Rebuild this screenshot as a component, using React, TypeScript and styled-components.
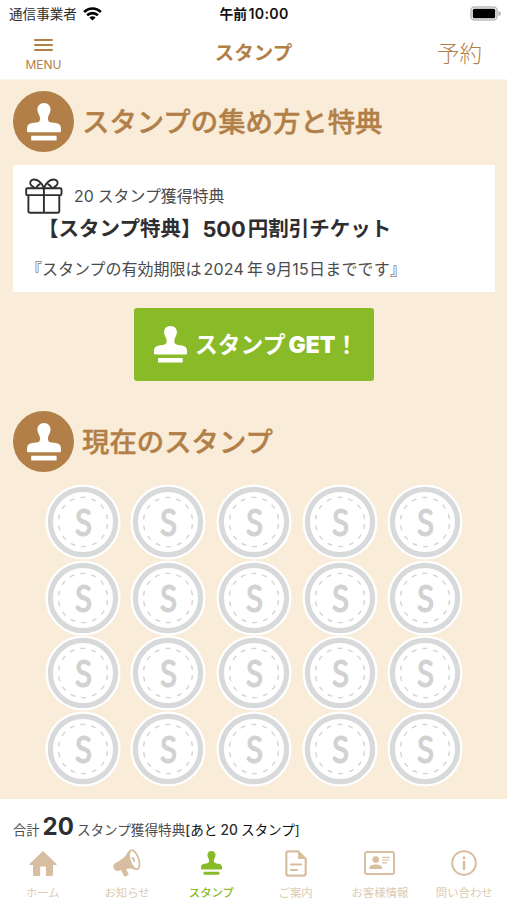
import React from 'react';
import styled, { createGlobalStyle } from 'styled-components';

const brown = '#b17f47';
const tan = '#d8bea0';
const green = '#89ba28';
const ink = '#2e2e30';
const gray = '#4b4b4d';

const Global = createGlobalStyle`
  * { box-sizing: border-box; }
  body { margin: 0; background: #fff; font-family: Inter, "Noto Sans CJK JP", sans-serif; color: ${ink}; }
  svg { display: block; flex: none; }
`;

const Screen = styled.div`
  width: 507px; height: 900px; display: flex; flex-direction: column;
  overflow: hidden; background: #fff;
`;
const StatusBar = styled.header`
  height: 28px; flex: none; display: grid; grid-template-columns: 1fr auto 1fr;
  align-items: center; padding: 0 5px 0 9px;
`;
const Carrier = styled.div`display: flex; align-items: center; gap: 6px;`;
const Clock = styled.div`display: flex; align-items: baseline; padding-right: 3px;`;
const BatterySlot = styled.div`display: flex; justify-content: flex-end; padding-bottom: 1px;`;
const NavBar = styled.div`
  height: 52px; flex: none; display: grid; grid-template-columns: 87px 1fr 87px;
  align-items: center; border-bottom: 1px solid #fbf6ec; color: ${brown};
`;
const MenuButton = styled.div`
  display: flex; flex-direction: column; align-items: center; gap: 6px; padding-top: 3px;
`;
const Title = styled.div`display: flex; justify-content: center;`;
const Main = styled.main`
  flex: none; height: 719px; background: #f9ecd8; padding: 11px 12px 0 13px;
`;
const Text = styled.span<{ $size: number; $weight?: number; $color?: string; $track?: number; $left?: number }>`
  white-space: nowrap; line-height: 1.2; flex: none;
  font-size: ${p => p.$size}px; font-weight: ${p => p.$weight ?? 400};
  color: ${p => p.$color ?? 'inherit'}; letter-spacing: ${p => p.$track ?? 0}px;
  margin-left: ${p => p.$left ?? 0}px;
`;
const Heading = styled.div`
  display: flex; align-items: center; height: 61px; gap: 8px; color: ${brown};
`;
const HeadingText = styled.h2`
  margin: 2px 0 0; font-size: 27.4px; font-weight: 500; line-height: 1.2; white-space: nowrap;
  -webkit-text-stroke: 0.4px currentColor;
`;
const Disc = styled.div`
  width: 61px; height: 61px; border-radius: 50%; background: ${brown}; color: #fff;
  display: flex; align-items: center; justify-content: center;
`;
const Coupon = styled.section`
  margin-top: 13px; height: 127px; background: #fff; padding: 13px 0 0 12px;
`;
const CouponTop = styled.div`display: flex; align-items: center; height: 36px; gap: 11px;`;
const CouponName = styled.div`
  display: flex; align-items: center; height: 29px; padding: 1px 0 0 13px;
`;
const Expiry = styled.div`
  display: flex; align-items: center; height: 20px; margin-top: 17px; padding-left: 1px; color: ${gray};
`;
const GetButton = styled.div`
  width: 240px; height: 73px; margin: 16px auto 30px; border-radius: 3px; background: ${green};
  display: flex; align-items: center; color: #fff; padding-left: 20px; gap: 8px;
`;
const StampGrid = styled.div`
  display: grid; grid-template-columns: repeat(5, 85.6px); grid-auto-rows: 75.7px;
  justify-content: center; justify-items: center; margin-top: 12px;
`;
const Total = styled.div`
  height: 48px; flex: none; display: flex; align-items: baseline; padding: 14px 0 0 13px;
`;
const Tabs = styled.nav`
  flex: 1; display: grid; grid-template-columns: repeat(6, 84.3px); justify-content: center;
`;
const Tab = styled.div<{ $active?: boolean }>`
  display: flex; flex-direction: column; align-items: center; gap: 8px;
  color: ${p => (p.$active ? green : tan)};
`;
const TabIcon = styled.div`height: 32px; display: flex; align-items: center; justify-content: center;`;

const StampIcon = ({ w = 34, h = 38 }: { w?: number; h?: number }) => (
  <svg width={w} height={h} viewBox="0 0 34 38" fill="currentColor" preserveAspectRatio="none">
    <path d="M17 0C12.7 0 10.4 3 10.4 6.4C10.4 10 13.1 12.2 13.1 15.5C13.1 18.1 11.8 19.3 9.2 19.6L5 20C1.6 20.5 0 22.5 0 25.5V28Q0 29.2 1.2 29.2H32.8Q34 29.2 34 28V25.5C34 22.5 32.4 20.5 29 20L24.8 19.6C22.2 19.3 20.9 18.1 20.9 15.5C20.9 12.2 23.6 10 23.6 6.4C23.6 3 21.3 0 17 0Z" />
    <rect x="4.2" y="32.8" width="25.4" height="4.7" rx=".6" />
  </svg>
);

const Wifi = () => (
  <svg width="19" height="14" viewBox="0 0 19 14">
    <g fill="none" stroke="#000" strokeWidth="2.6">
      <path d="M1.1 5C5.8.4 13.2.4 17.9 5" />
      <path d="M4.1 8.3C7.1 5.4 11.9 5.4 14.9 8.3" />
    </g>
    <path d="M6.4 10.5C8.2 8.9 10.8 8.9 12.6 10.5L9.5 13.6Z" />
  </svg>
);

const Battery = () => (
  <svg width="32" height="15" viewBox="0 0 32 15">
    <rect x="1" y="1" width="26" height="13" rx="3.5" fill="#fff" stroke="#bcbcbc" strokeWidth="1.6" />
    <rect x="2.8" y="2.8" width="22.4" height="9.4" rx="1.5" />
    <path d="M28.5 4.8Q30.8 5.7 30.8 7.5T28.5 10.2Z" fill="#aaa" />
  </svg>
);

const Gift = () => (
  <svg width="38" height="36" viewBox="0 0 38 36" fill="none" stroke={ink} strokeWidth="1.9">
    <rect x="1.2" y="10.3" width="35.3" height="6.8" rx="1" />
    <path d="M3.4 17.1V33Q3.4 34.8 5.2 34.8H32.5Q34.3 34.8 34.3 33V17.1M18.9 10.3V34.8" />
    <path d="M18.9 10.3C16.8 4.2 12.3 1.2 8.5 1.5C5 1.9 4.2 5.5 6.4 7.5Q8 9 10 10.2M11 10Q12.5 7 15.2 6M18.9 10.3C21 4.2 25.5 1.2 29.3 1.5C32.8 1.9 33.6 5.5 31.4 7.5Q29.8 9 27.8 10.2M26.8 10Q25.3 7 22.6 6" />
  </svg>
);

const Coin = () => (
  <svg width="76" height="76" viewBox="0 0 76 76">
    <circle cx="38" cy="38" r="37.6" fill="#fff" />
    <circle cx="38" cy="38" r="32.6" fill="none" stroke="#d8d9da" strokeWidth="5.2" />
    <circle cx="38" cy="38" r="24.6" fill="none" stroke="#d3d4d5" strokeWidth="1.4"
      strokeDasharray="4.9 6.14" transform="rotate(5 38 38)" />
    <text transform="translate(38.5 50.6) scale(.87 1)" textAnchor="middle" fontFamily="Lato" fontWeight="300"
      fontSize="34.5" fill="#d2d2d2" stroke="#d2d2d2" strokeWidth="3" strokeLinejoin="round">S</text>
  </svg>
);

const HomeIcon = () => (
  <svg width="28" height="25" viewBox="0 0 28 25" fill="currentColor">
    <path d="M14 0L27.6 13Q28 14 27 14H24V23.5Q24 25 22.5 25H17V15.5H11.2V25H5.5Q4 25 4 23.5V14H1Q0 14 .5 13Z" />
  </svg>
);
const HornIcon = () => (
  <svg width="28" height="28" viewBox="0 0 28 28" fill="currentColor">
    <path d="M15.3 1.5C13.2 7.5 9.1 10.8 3.2 13.4C.5 14.7-.3 17 .8 19.3C1.9 21.9 4 22.5 6.6 21.5L8 21L10.8 26.5C11.2 27.4 12 27.6 12.9 27.2L14.9 26.3C15.8 25.9 15.7 25.2 15.3 24.5L13.2 20C16.3 19 19.6 19.2 23.3 21Z" />
    <ellipse cx="21.3" cy="10.7" rx="4.4" ry="9.9" transform="rotate(-18 21.3 10.7)" fill="#fff" stroke="currentColor" strokeWidth="1.7" />
    <path d="M18.4 8C21.3 7.2 23.3 11.6 20.8 13.6Z" />
  </svg>
);
const DocIcon = () => (
  <svg width="22" height="27" viewBox="0 0 22 27" fill="none" stroke="currentColor" strokeWidth="2.2">
    <path d="M3.4 1.3H13L20.7 9V23.5Q20.7 25.7 18.5 25.7H3.4Q1.3 25.7 1.3 23.5V3.4Q1.3 1.3 3.4 1.3Z" />
    <path d="M13 1.3V9H20.7Z" fill="currentColor" stroke="none" />
    <path d="M6 14.5H16M6 20H12" strokeLinecap="round" />
  </svg>
);
const CardIcon = () => (
  <svg width="31" height="24" viewBox="0 0 31 24" fill="currentColor">
    <rect x="1" y="1" width="29" height="22" rx="2" fill="none" stroke="currentColor" strokeWidth="2" />
    <circle cx="11.7" cy="8.6" r="3.3" />
    <path d="M5.5 18V16.5C5.5 12.5 18 12.5 18 16.5V18Z" />
    <path d="M18.3 6.3H25.7M18.3 9H25.7M18.3 11.8H22.8" stroke="currentColor" strokeWidth="1.2" />
  </svg>
);
const InfoIcon = () => (
  <svg width="26" height="26" viewBox="0 0 26 26" fill="none" stroke="currentColor" strokeLinecap="round">
    <circle cx="13" cy="13" r="11.8" strokeWidth="2" />
    <path d="M13 12V18.7" strokeWidth="2.5" />
    <circle cx="13" cy="7.8" r="1.5" fill="currentColor" stroke="none" />
  </svg>
);

const tabs = [
  { label: 'ホーム', icon: <HomeIcon /> },
  { label: 'お知らせ', icon: <HornIcon /> },
  { label: 'スタンプ', icon: <StampIcon w={21} h={24} />, active: true },
  { label: 'ご案内', icon: <DocIcon /> },
  { label: 'お客様情報', icon: <CardIcon /> },
  { label: '問い合わせ', icon: <InfoIcon /> },
];

export default function App() {
  return (
    <Screen>
      <Global />
      <StatusBar>
        <Carrier><Text $size={13.6}>通信事業者</Text><Wifi /></Carrier>
        <Clock>
          <Text $size={13.8} $weight={600} $color="#111">午前</Text>
          <Text $size={14.2} $weight={600} $color="#111" $left={1.5} $track={0.3}>10:00</Text>
        </Clock>
        <BatterySlot><Battery /></BatterySlot>
      </StatusBar>
      <NavBar>
        <MenuButton>
          <svg width="19" height="14" viewBox="0 0 19 14" stroke="currentColor" strokeWidth="2" strokeLinecap="round">
            <path d="M1 2H18M1 7H18M1 12H18" />
          </svg>
          <Text $size={12}>MENU</Text>
        </MenuButton>
        <Title><Text $size={19.5} $weight={600}>スタンプ</Text></Title>
        <Text $size={22.5} $weight={300} $left={17}>予約</Text>
      </NavBar>
      <Main>
        <Heading>
          <Disc><StampIcon /></Disc>
          <HeadingText>スタンプの集め方と特典</HeadingText>
        </Heading>
        <Coupon>
          <CouponTop>
            <Gift />
            <div>
              <Text $size={15.9} $color={gray}>20</Text>
              <Text $size={15.9} $color={gray} $left={4}>スタンプ獲得特典</Text>
            </div>
          </CouponTop>
          <CouponName>
            <Text $size={20.5} $weight={600}>【スタンプ特典】</Text>
            <Text $size={21.8} $weight={700} $left={1}>500</Text>
            <Text $size={20.5} $weight={600} $left={2}>円割引チケット</Text>
          </CouponName>
          <Expiry>
            <Text $size={16}>『スタンプの有効期限は</Text>
            <Text $size={16} $left={2} $track={0.2}>2024</Text>
            <Text $size={16} $left={3}>年</Text>
            <Text $size={16} $left={3} $track={0.2}>9月15日までです』</Text>
          </Expiry>
        </Coupon>
        <GetButton>
          <StampIcon w={33} h={37} />
          <div>
            <Text $size={22.8} $weight={700}>スタンプ</Text>
            <Text $size={22.8} $weight={900} $left={3}>GET</Text>
            <Text $size={22.8} $weight={700}>！</Text>
          </div>
        </GetButton>
        <Heading>
          <Disc><StampIcon /></Disc>
          <HeadingText>現在のスタンプ</HeadingText>
        </Heading>
        <StampGrid>
          {Array.from({ length: 20 }, (_, i) => <Coin key={i} />)}
        </StampGrid>
      </Main>
      <Total>
        <Text $size={13.3} $color={gray}>合計</Text>
        <Text $size={24} $weight={700} $left={3}>20</Text>
        <Text $size={13.6} $color={gray} $left={3}>スタンプ獲得特典</Text>
        <Text $size={13.6} $weight={500}>[</Text>
        <Text $size={13.6} $color="#111">あと</Text>
        <Text $size={13.8} $weight={500} $left={3}>20</Text>
        <Text $size={13.6} $color="#111" $left={3}>スタンプ</Text>
        <Text $size={13.6}>]</Text>
      </Total>
      <Tabs>
        {tabs.map(t => (
          <Tab key={t.label} $active={t.active}>
            <TabIcon>{t.icon}</TabIcon>
            <Text $size={11.4} $weight={t.active ? 500 : 400} $color={t.active ? green : '#dccbb2'}>{t.label}</Text>
          </Tab>
        ))}
      </Tabs>
    </Screen>
  );
}
